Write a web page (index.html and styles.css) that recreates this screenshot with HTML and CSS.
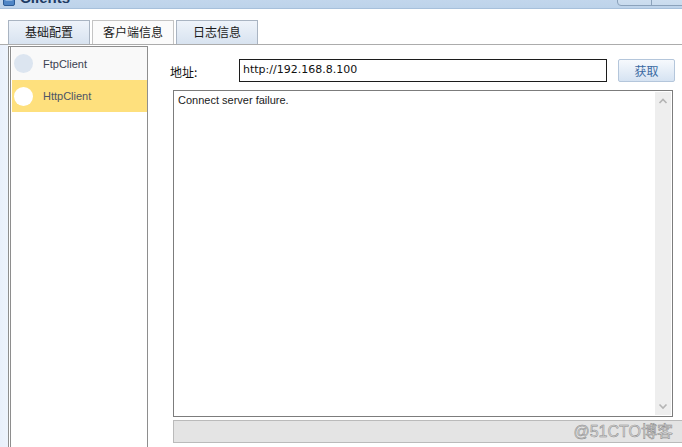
FILE: index.html
```html
<!DOCTYPE html>
<html lang="zh-CN">
<head>
<meta charset="utf-8">
<title>Clients</title>
<link rel="stylesheet" href="styles.css">
</head>
<body>
<div class="window">
  <div class="titlebar">
    <span class="app-icon"><svg width="12" height="12" viewBox="0 0 12 12"><rect x="0.5" y="0.5" width="11" height="11" rx="1.5" fill="#4f86c6" stroke="#2b5a94"/><rect x="2.5" y="2.5" width="7" height="4" fill="#cfe2f7"/></svg></span>
    <span class="title">Clients</span>
    <span class="winbtns"><span class="wb"></span><span class="wb"></span></span>
  </div>
  <div class="tabs">
    <div class="tab">基础配置</div>
    <div class="tab active">客户端信息</div>
    <div class="tab">日志信息</div>
  </div>
  <div class="page">
    <div class="side-strip"></div>
    <ul class="client-list">
      <li class="client"><span class="dot"></span>FtpClient</li>
      <li class="client selected"><span class="dot"></span>HttpClient</li>
    </ul>
    <div class="main">
      <div class="addr-row">
        <span class="addr-label">地址:</span>
        <div class="addr-input">http://192.168.8.100</div>
        <button class="fetch-btn">获取</button>
      </div>
      <div class="output">
        <div class="output-text">Connect server failure.</div>
        <div class="vscroll">
          <svg width="16" height="12" viewBox="0 0 16 12"><polyline points="4.5,8 8,4.5 11.5,8" fill="none" stroke="#b4b4b4" stroke-width="1.6"/></svg>
          <svg width="16" height="12" viewBox="0 0 16 12"><polyline points="4.5,4.5 8,8 11.5,4.5" fill="none" stroke="#b4b4b4" stroke-width="1.6"/></svg>
        </div>
      </div>
      <div class="status-bar"></div>
    </div>
  </div>
  <div class="watermark">@51CTO博客</div>
</div>
</body>
</html>
```
FILE: styles.css
```css
html, body {
  margin: 0;
  padding: 0;
  background: #ffffff;
}

.window {
  position: relative;
  width: 682px;
  height: 447px;
  overflow: hidden;
  background: #ffffff;
  font-family: "Liberation Sans", "Noto Sans CJK SC", sans-serif;
  font-size: 11px;
  color: #222;
}

/* title bar (mostly cut off) */
.titlebar {
  height: 8px;
  display: flex;
  align-items: flex-start;
  overflow: hidden;
  background: linear-gradient(#c2d6ec, #bdd3ea);
  border-bottom: 1px solid #a7c0db;
}

.app-icon {
  display: block;
  margin: -6px 0 0 3px;
  width: 12px;
  height: 12px;
}

.title {
  display: block;
  margin: -10px 0 0 5px;
  font-family: "Liberation Sans", sans-serif;
  font-weight: bold;
  font-size: 15px;
  line-height: 15px;
  color: #1d3b63;
}

.winbtns {
  display: flex;
  margin: -12px -4px 0 auto;
  height: 16px;
  border: 1px solid #8ba2bb;
  border-radius: 4px;
  background: linear-gradient(#d6e4f2, #c9dbee);
}

.wb {
  display: block;
  width: 33px;
  height: 16px;
}

.wb + .wb {
  border-left: 1px solid #8ba2bb;
}

/* tabs */
.tabs {
  display: flex;
  gap: 2px;
  margin-top: 11px;
  padding-left: 8px;
  border-bottom: 1px solid #acacac;
}

.tab {
  box-sizing: border-box;
  width: 82px;
  height: 24px;
  border: 1px solid #a9b4c2;
  border-bottom: none;
  background: linear-gradient(#eef3fa, #d8e3f0);
  font-family: "Noto Sans CJK SC", sans-serif;
  font-size: 12px;
  line-height: 22px;
  text-align: center;
  color: #1a1a1a;
}

.tab.active {
  background: #fbfbfb;
  border-color: #c4c4c4;
}

/* page */
.page {
  display: flex;
  height: 402px;
}

.side-strip {
  flex: 0 0 8px;
  background: linear-gradient(90deg, #e9f0fb, #edf3fc);
}

.client-list {
  list-style: none;
  box-sizing: border-box;
  flex: 0 0 140px;
  width: 140px;
  margin: 1px 0 0 0;
  padding: 0 0 0 1px;
  border-left: 3px double #8e8e8e;
  border-top: 1px solid #8e8e8e;
  border-right: 1px solid #8e8e8e;
  background: #ffffff;
}

.client {
  display: flex;
  align-items: center;
  height: 33px;
  padding-left: 2px;
  background: #f9f9f9;
  color: #3c4250;
  font-family: "Liberation Sans", sans-serif;
  font-size: 11px;
}

.client.selected {
  height: 32px;
  background: #fee07d;
  color: #4d5566;
}

.dot {
  flex: 0 0 19px;
  height: 19px;
  border-radius: 50%;
  background: #dce5f0;
  margin-right: 10px;
}

.client.selected .dot {
  background: #ffffff;
}

/* main area */
.main {
  flex: 1 1 auto;
  min-width: 0;
  padding-top: 14px;
}

.addr-row {
  display: flex;
  align-items: center;
  padding-left: 22px;
}

.addr-label {
  flex: 0 0 69px;
  font-family: "Noto Sans CJK SC", sans-serif;
  font-size: 12px;
  color: #111;
  padding-top: 1px;
}

.addr-input {
  box-sizing: border-box;
  flex: 0 0 368px;
  height: 23px;
  border: 1px solid #1c1c1c;
  padding-left: 3px;
  font-family: "DejaVu Sans", sans-serif;
  font-size: 11px;
  line-height: 19px;
  color: #111;
}

.fetch-btn {
  box-sizing: border-box;
  flex: 0 0 57px;
  margin-left: 11px;
  height: 23px;
  padding: 0;
  border: 1px solid #b4c6db;
  border-radius: 2px;
  background: linear-gradient(#f6f9fd, #d6e3f2);
  font-family: "Noto Sans CJK SC", sans-serif;
  font-size: 12px;
  color: #3a6aa2;
}

.output {
  box-sizing: border-box;
  display: flex;
  margin: 8px 0 0 25px;
  width: 500px;
  height: 327px;
  border: 1px solid #7c7c7c;
}

.output-text {
  flex: 1;
  padding: 2px 4px;
  font-family: "Liberation Sans", sans-serif;
  font-size: 11px;
  line-height: 14px;
  color: #1a1a1a;
}

.vscroll {
  display: flex;
  flex-direction: column;
  justify-content: space-between;
  flex: 0 0 16px;
  margin: 1px 1px 1px 0;
  padding: 3px 0;
  background: #eeeeee;
}

.vscroll svg {
  display: block;
}

.status-bar {
  box-sizing: border-box;
  margin: 3px 0 0 25px;
  width: 515px;
  height: 23px;
  background: #e4e4e4;
  border: 1px solid #bababa;
}

.watermark {
  position: absolute;
  right: 9px;
  bottom: 6px;
  font-family: "Liberation Sans", "Noto Sans CJK SC", sans-serif;
  font-size: 16px;
  line-height: 18px;
  color: #dadada;
  -webkit-text-stroke: 0.5px #8a8a8a;
}
```
